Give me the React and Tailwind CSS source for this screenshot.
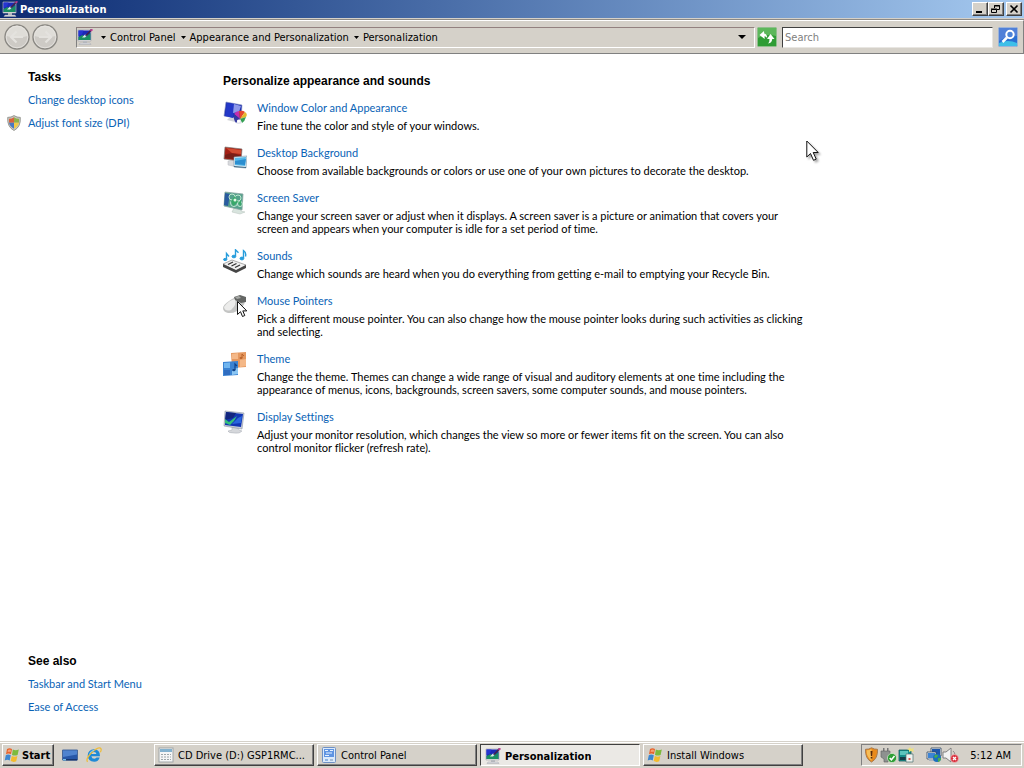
import { useState } from 'react'

const TASK_LINKS = [
  { label: 'Change desktop icons' },
  { label: 'Adjust font size (DPI)', shield: true },
]

const SEE_ALSO = ['Taskbar and Start Menu', 'Ease of Access']

const SETTINGS = [
  {
    title: 'Window Color and Appearance',
    text: 'Fine tune the color and style of your windows.',
    icon: WindowColorIcon,
  },
  {
    title: 'Desktop Background',
    text: 'Choose from available backgrounds or colors or use one of your own pictures to decorate the desktop.',
    icon: BackgroundIcon,
  },
  {
    title: 'Screen Saver',
    text: 'Change your screen saver or adjust when it displays. A screen saver is a picture or animation that covers your screen and appears when your computer is idle for a set period of time.',
    icon: ScreenSaverIcon,
  },
  {
    title: 'Sounds',
    text: 'Change which sounds are heard when you do everything from getting e-mail to emptying your Recycle Bin.',
    icon: SoundsIcon,
  },
  {
    title: 'Mouse Pointers',
    text: 'Pick a different mouse pointer. You can also change how the mouse pointer looks during such activities as clicking and selecting.',
    icon: MouseIcon,
  },
  {
    title: 'Theme',
    text: 'Change the theme. Themes can change a wide range of visual and auditory elements at one time including the appearance of menus, icons, backgrounds, screen savers, some computer sounds, and mouse pointers.',
    icon: ThemeIcon,
  },
  {
    title: 'Display Settings',
    text: 'Adjust your monitor resolution, which changes the view so more or fewer items fit on the screen. You can also control monitor flicker (refresh rate).',
    icon: DisplayIcon,
  },
]

const WINDOWS = [
  { label: 'CD Drive (D:) GSP1RMC...', icon: DriveIcon },
  { label: 'Control Panel', icon: PanelIcon },
  { label: 'Personalization', icon: PersonalizeIcon },
  { label: 'Install Windows', icon: FlagIcon },
]

const RAISED =
  'border border-t-white border-l-white border-r-[#404040] border-b-[#404040] shadow-[inset_-1px_-1px_0_#808080]'

/* ---------- icons ---------- */

function PersonalizeIcon({ className = 'size-4' }) {
  return (
    <svg viewBox="0 0 16 16" className={className} aria-hidden="true">
      <path d="M1 1h13v11H1z" fill="#e8e8ea" stroke="#a9abb0" strokeWidth=".7" />
      <path d="M1.500 1.500h12v9.500h-12z" fill="#1c28b8" />
      <path d="M1.500 8l4-2 3 2 5-4v7h-12z" fill="#1a8f62" />
      <path d="M1.500 1.500h5l-1.500 4-3.500 1.500z" fill="#2636d0" />
      <path d="M5 8.500l3-3 2 1-2 2z" fill="#d8f0e4" />
      <path d="M8 6.500L14 0l1.500 1L9.500 7z" fill="#43264a" />
      <path d="M13 1l2-1 1 1-2 1.500z" fill="#c93a96" />
      <path d="M6 12h4v2H6z" fill="#b9bcc1" />
      <path d="M3 14h10l1 1.500H2z" fill="#dcdee2" stroke="#a4a7ad" strokeWidth=".5" />
    </svg>
  )
}

function FlagIcon({ className = 'size-4' }) {
  return (
    <svg viewBox="0 0 16 16" className={className} aria-hidden="true">
      <path d="M3 2q2.500-1.500 5 0L7 7.300Q4.500 6 2 7.200z" fill="#e8642c" />
      <path d="M8.800 2.500q2.500 1.500 6 .1L13.600 8q-3 1.200-5.600-.1z" fill="#7dba3c" />
      <path d="M1.800 8.200q2.500-1.200 5 .1L5.700 13.500q-2.200-1.400-5-.1z" fill="#3d87d0" />
      <path d="M7.800 8.900q2.600 1.400 5.600.2L12.200 14.300q-2.800 1.300-5.500-.2z" fill="#f3bb2d" />
      <path d="M4 3q1.500-.8 3 0l-.4 2q-1.600-.6-3 0z" fill="#f6a277" />
    </svg>
  )
}

function DriveIcon({ className = 'size-4' }) {
  return (
    <svg viewBox="0 0 16 16" className={className} aria-hidden="true">
      <rect x="1" y="1" width="14" height="14" fill="#f5f6f6" stroke="#a0a6a8" />
      <rect x="2" y="2" width="12" height="3" fill="#83b2cf" />
      <path d="M3 7h2v1H3zm3 0h2v1H6zm3 0h2v1H9zm3 0h1v1h-1zM3 9.500h2v1H3zm3 0h2v1H6zm3 0h2v1H9zm3 0h1v1h-1zM3 12h2v1H3zm3 0h2v1H6zm3 0h2v1H9zm3 0h1v1h-1z" fill="#9da6a9" />
    </svg>
  )
}

function PanelIcon({ className = 'size-4' }) {
  return (
    <svg viewBox="0 0 16 16" className={className} aria-hidden="true">
      <rect x="1.500" y=".5" width="13" height="15" rx="1" fill="#dceafa" stroke="#6f91c4" />
      <rect x="3" y="2" width="10" height="8" fill="#5f94e2" />
      <path d="M4 3.500h3M9 3.500h3M5 6h6M4 8.500h4" stroke="#e8f2ff" />
      <path d="M4 12h3v2H4z" fill="#8fb4e4" />
      <path d="M9 12h3v2H9z" fill="#a8bdd6" />
    </svg>
  )
}

function DesktopIcon() {
  return (
    <svg viewBox="0 0 16 16" className="size-4" aria-hidden="true">
      <path d="M.5 3h15v10H.5z" fill="#2757a8" stroke="#48689a" />
      <path d="M1 3.500h14v4L1 10z" fill="#4f83cf" />
      <path d="M1 12h14v1.500H1z" fill="#17356f" />
      <path d="M1 12h3v1.500H1z" fill="#79c1e8" />
    </svg>
  )
}

function BrowserIcon() {
  return (
    <svg viewBox="0 0 16 16" className="size-4" aria-hidden="true">
      <path d="M14 9.200H5.400q.4 2.500 3 2.500 1.500 0 2.200-1.100h3.100Q12.500 14.800 8.200 14.800 1.800 14.500 1.700 8.600 2.100 2.500 8 2.300q6.200.4 6 6.900z" fill="#1f8ad6" />
      <path d="M5.400 7.100h5Q10.200 5 8 5q-2.300 0-2.600 2.100z" fill="#d5d2cb" />
      <path d="M1.500 14.800Q-.5 12 5 6.200q7-6.300 9.500-5 1.400 1-.1 4" fill="none" stroke="#eebc39" strokeWidth="1.300" />
      <path d="M3.500 6.500Q5 3.700 8 3.300" fill="none" stroke="#8ccff5" />
    </svg>
  )
}

function ShieldIcon() {
  return (
    <svg viewBox="0 0 16 16" className="size-4" aria-hidden="true">
      <path d="M8 .6q3 2 6.300 1.800Q15 12 8 15.500 1 12 1.700 2.400 5 2.600 8 .6z" fill="#c9cac6" stroke="#85877f" strokeWidth=".8" />
      <path d="M8 2.300v5.500H3V3.800q3 0 5-1.500z" fill="#d8643d" />
      <path d="M8 2.300q2 1.500 5 1.500v4H8z" fill="#8fb04a" />
      <path d="M3 7.800h5v5.900Q3.600 11.300 3 7.800z" fill="#4a78c2" />
      <path d="M13 7.800H8v5.900q4.400-2.400 5-5.900z" fill="#f2ca48" />
    </svg>
  )
}

function WindowColorIcon() {
  return (
    <svg viewBox="0 0 24 24" className="size-6" aria-hidden="true">
      <path d="M6 17l8-1 2 4-4 1-8-2z" fill="#d3d5da" />
      <path d="M3 1l16 3-1 14L1 15z" fill="#1c2fae" stroke="#8792c3" strokeWidth=".6" />
      <path d="M4 2l8 1-2 14-8-2z" fill="#2338c8" />
      <path d="M11 3l7 2-2 6-6 1z" fill="#8d98ea" />
      <path d="M17 18l-6-5q2-3 5-3z" fill="#c12fb0" />
      <path d="M17 18l-1-8q4-1 6 1z" fill="#e6472c" />
      <path d="M17 18l5-7q3 2 1 5z" fill="#e5b82d" />
      <path d="M17 18l6-2q-1 4-4 6z" fill="#34a053" />
      <path d="M17 18l2 4q-4 2-6 0z" fill="#e4e5ec" />
      <path d="M17 18l-4 4q-3-4-2-9z" fill="#3338a0" />
      <circle cx="15.500" cy="20" r="1.600" fill="#fff" />
    </svg>
  )
}

function BackgroundIcon() {
  return (
    <svg viewBox="0 0 24 24" className="size-6" aria-hidden="true">
      <path d="M5 15l5-1 1 3 3 4-9-2z" fill="#d7d9dc" stroke="#b9bbc0" strokeWidth=".5" />
      <path d="M2 1l17 2-1 12L1 13z" fill="#a42015" stroke="#807b79" strokeWidth=".7" />
      <path d="M3 2l15 2v4L9 7z" fill="#d04a30" />
      <path d="M2 9q7-4 16 1v4L2 12z" fill="#771e17" />
      <path d="M11 11l13-1-1 12-12-1z" fill="#daecf5" stroke="#7a96a7" strokeWidth=".6" />
      <path d="M12 12l11-1-1 9-10-1z" fill="#55b9ea" />
      <path d="M12 15l11-2-1 6-10-1z" fill="#2b8ed0" />
      <path d="M11 20l12 1v1l-12-1z" fill="#426b86" />
    </svg>
  )
}

function ScreenSaverIcon() {
  return (
    <svg viewBox="0 0 24 24" className="size-6" aria-hidden="true">
      <path d="M11 17h6l1 3 4 1-5 2-8-2z" fill="#d8e4de" stroke="#b4c1bb" strokeWidth=".5" />
      <path d="M2 1l18 2-1 16L1 15z" fill="#55a18c" stroke="#8ba5a2" strokeWidth=".8" />
      <path d="M2 2l5 1-2 12-4-1z" fill="#2a5b9f" />
      <g fill="none" stroke="#bfe8ce" strokeWidth="1">
        <circle cx="9" cy="6" r="3" />
        <circle cx="15" cy="7" r="3" />
        <circle cx="11" cy="12" r="3.500" />
        <circle cx="17" cy="13" r="2.500" />
      </g>
      <path d="M8 10l4-5 3 6-5 4zm7 2l3-3v6z" fill="#39a969" />
      <circle cx="12" cy="9" r="1.500" fill="#e6f7ea" />
    </svg>
  )
}

function SoundsIcon() {
  return (
    <svg viewBox="0 0 24 24" className="size-6" aria-hidden="true">
      <path d="M0 15l9-4 14 5-10 6z" fill="#f0f0f0" stroke="#777" strokeWidth=".6" />
      <path d="M0 15l13 6 10-5v3l-10 5L0 18z" fill="#454545" />
      <path d="M5 15.500l5-2.500M8.500 17l5-2.500M12 18.500l5-2.500" stroke="#333" strokeWidth="1.300" />
      <g fill="#279ddc" stroke="#279ddc">
        <path d="M3.500 10V4.500l2.500 3M12.500 7V.8l3 3M20.500 9V1.500q3 2 2 6" fill="none" strokeWidth="1.400" />
        <ellipse cx="2.200" cy="10.500" rx="1.700" ry="1.100" />
        <ellipse cx="10.900" cy="7.500" rx="1.900" ry="1.300" />
        <ellipse cx="18.900" cy="9.500" rx="1.900" ry="1.400" />
      </g>
    </svg>
  )
}

function MouseIcon() {
  return (
    <svg viewBox="0 0 24 24" className="size-6" aria-hidden="true">
      <path d="M0 14q0-3 6-7 8-6 13-3 5 3 1 8-7 8-15 7-5-1-5-5z" fill="#c4c5c4" />
      <path d="M1 13Q6 6 12 5q2 6-4 11-6 2-7-3z" fill="#ececeb" />
      <path d="M11 3l6-2 6 2v5l-5 1-6-3z" fill="#646664" />
      <path d="M12 3l4-1 2 2-4 1z" fill="#a6a8a5" />
      <path d="M14.500 7.500v13l3-2.800 2 4.800 2.300-1-2-4.600h4z" fill="#fff" stroke="#111" strokeWidth="1" />
    </svg>
  )
}

function ThemeIcon() {
  return (
    <svg viewBox="0 0 24 24" className="size-6" aria-hidden="true">
      <path d="M8 1l15-1v15l-14 1z" fill="#e5985f" />
      <path d="M9 2l6-1v6H9zM17 8l6-1v7l-6 1z" fill="#f4b888" />
      <path d="M19 6V2l2 2" fill="none" stroke="#b8622b" />
      <ellipse cx="18" cy="6" rx="1.500" ry="1" fill="#b8622b" />
      <path d="M0 10l15-1v14l-15 1z" fill="#3a82d2" />
      <path d="M1 11l6-.5V16H1z" fill="#70b5ef" />
      <path d="M1 18h6v5H1z" fill="#2f6cc0" />
      <path d="M9 17l6-1v6l-6 1z" fill="#8bc6f3" />
      <path d="M12 18v-6l2 2" fill="none" stroke="#10448d" strokeWidth="1.200" />
      <ellipse cx="10.800" cy="18" rx="1.700" ry="1.200" fill="#10448d" />
    </svg>
  )
}

function DisplayIcon() {
  return (
    <svg viewBox="0 0 24 24" className="size-6" aria-hidden="true">
      <path d="M9 17l6 1 1 2 3 1q-2 3-8 2-6 0-6-2l4-1z" fill="#d5d7db" stroke="#a9adb4" strokeWidth=".5" />
      <path d="M2 1l19 2-2 16L1 16z" fill="#c7cdd6" stroke="#8d96a6" strokeWidth=".6" />
      <path d="M3 2l17 2-2 13-16-2z" fill="#1236b4" />
      <path d="M3 2l10 1-3 5-8 2z" fill="#11257e" />
      <path d="M2 9l4 3 8-6-3 5-4 4-5-2z" fill="#35c07c" />
      <path d="M9 14l6-6 4-2-1 7z" fill="#2a66de" />
    </svg>
  )
}

function RefreshIcon() {
  return (
    <svg viewBox="0 0 20 20" className="size-5" aria-hidden="true">
      <rect x=".5" y=".5" width="19" height="19" rx="1" fill="#2f9c35" stroke="#8fbf8c" />
      <path d="M1 1h18v8q-9-3-18 2z" fill="#5cb75b" />
      <path d="M2.500 8L7 4l.2 2.500q3 .5 3 4.500-1-1.700-2.700-1.700L7.700 12z" fill="#fff" />
      <path d="M13.500 7l4 5h-2.300q-.2 4-4.200 4.500 1.700-1.700 1.500-4.500H10z" fill="#fff" />
    </svg>
  )
}

function SearchIcon() {
  return (
    <svg viewBox="0 0 20 20" className="size-5" aria-hidden="true">
      <rect x=".5" y=".5" width="19" height="19" rx="1" fill="#2a6fd2" stroke="#9db4d8" />
      <path d="M1 1h18v8Q8 9 1 14z" fill="#5080d8" />
      <path d="M1 16q9-4 18 0v3H1z" fill="#3fbfe8" />
      <circle cx="12" cy="7.500" r="3.700" fill="#4c83d8" stroke="#fff" strokeWidth="2" />
      <path d="M9 10.500L4.500 15" stroke="#fff" strokeWidth="2.500" />
    </svg>
  )
}

function NavCircle({ flip }) {
  return (
    <svg viewBox="0 0 26 26" className={flip ? 'size-[26px] -scale-x-100' : 'size-[26px]'} aria-hidden="true">
      <circle cx="13" cy="13" r="12" fill="#cdcac5" stroke="#8a8883" strokeWidth="1.400" />
      <path d="M2.500 12a10.500 10.500 0 0121 0q-10 3-21 0z" fill="#dfddd8" />
      <circle cx="13" cy="13" r="10.800" fill="none" stroke="#e8e6e2" strokeWidth=".8" />
      <path d="M12.500 7.500L7 13l5.500 5.500M7.500 13H19" fill="none" stroke="#e4e2de" strokeWidth="2.200" />
    </svg>
  )
}

function Caret() {
  return (
    <svg viewBox="0 0 5 3" className="h-[3px] w-[5px] shrink-0" aria-hidden="true">
      <path d="M0 0h5L2.500 3z" fill="#000" />
    </svg>
  )
}

function AlertShieldIcon() {
  return (
    <svg viewBox="0 0 16 16" className="size-4" aria-hidden="true">
      <path d="M7.500.8q3 1.700 6 1.500.6 9-6 12.700Q1 11.500 1.500 2.300 5 2.500 7.500.8z" fill="#e98a1b" stroke="#a87a4c" />
      <path d="M7.500 2q-2 1.300-5 1.300 0 7 5 10.200z" fill="#f7bd57" />
      <path d="M6.500 4h2l-.4 5H6.900zM6.700 10h1.600v1.600H6.700z" fill="#5a2c0b" />
    </svg>
  )
}

function DeviceIcon() {
  return (
    <svg viewBox="0 0 18 16" className="h-4 w-[18px]" aria-hidden="true">
      <path d="M3 1h1.500v3H3zM7 1h1.500v3H7z" fill="#777" />
      <path d="M1 4h9v6l-2 2v3H4v-3l-3-2z" fill="#8e918f" stroke="#5e605f" strokeWidth=".6" />
      <circle cx="12" cy="11" r="4.600" fill="#2f9e35" stroke="#d7ead3" strokeWidth=".7" />
      <path d="M9.700 11l1.700 1.800L14.500 9" fill="none" stroke="#fff" strokeWidth="1.500" />
    </svg>
  )
}

function ServerIcon() {
  return (
    <svg viewBox="0 0 16 16" className="size-4" aria-hidden="true">
      <path d="M1 3h12v11H1z" fill="#168f8c" stroke="#145c5c" strokeWidth=".8" />
      <path d="M2 4h8v4H2z" fill="#5bc5bd" />
      <path d="M2 10h6v3H2z" fill="#153d48" />
      <path d="M8 7h7v8H8z" fill="#eef2ee" stroke="#4c7070" strokeWidth=".7" />
      <path d="M10.500 11h2v2h-2z" fill="#d6544f" />
      <path d="M12 0l1 2 3-1-1 2 1 2-3-1-2 1V3L9 2l2-.500z" fill="#efe27b" />
    </svg>
  )
}

function NetworkIcon() {
  return (
    <svg viewBox="0 0 16 16" className="size-4" aria-hidden="true">
      <path d="M5 1h10v8H5z" fill="#e7edf4" stroke="#34465e" strokeWidth=".8" />
      <path d="M6 2h8v6H6z" fill="#1d57ad" />
      <path d="M1 5h9v7H1z" fill="#edf2f7" stroke="#34465e" strokeWidth=".8" />
      <path d="M2 6h7v5H2z" fill="#3d84d4" />
      <path d="M3 12h5v2H3z" fill="#adb5be" />
      <circle cx="11" cy="11" r="4" fill="#1a70bd" />
      <path d="M9 8q3-1 3 1l-2 2-2-1zm3 3h3q0 3-3 4z" fill="#45ae4d" />
    </svg>
  )
}

function MutedIcon() {
  return (
    <svg viewBox="0 0 18 16" className="h-4 w-[18px]" aria-hidden="true">
      <path d="M1 5h3l5-4v14l-5-4H1z" fill="#f3f3f2" stroke="#777" strokeWidth=".9" />
      <path d="M11 4q2 1.500 2 4" fill="none" stroke="#888" />
      <circle cx="12.500" cy="11.500" r="4" fill="#d9303d" stroke="#f2cccf" strokeWidth=".6" />
      <path d="M11 10l3 3m0-3l-3 3" stroke="#fff" strokeWidth="1.300" />
    </svg>
  )
}

/* ---------- window chrome ---------- */

function CaptionButton({ label, children }) {
  return (
    <button type="button" aria-label={label} className={`flex h-[14px] w-4 items-center justify-center bg-[#d5d1c9] ${RAISED}`}>
      <svg viewBox="0 0 12 10" className="h-[10px] w-3" fill="none" stroke="#000" aria-hidden="true">
        {children}
      </svg>
    </button>
  )
}

function TitleBar() {
  return (
    <header className="flex h-[18px] items-center justify-between bg-linear-to-r from-[#0c2a72] to-[#a6caf0] px-0.5">
      <div className="flex items-center gap-0.5">
        <PersonalizeIcon className="size-4" />
        <h1 className="font-['DejaVu_Sans_Condensed','DejaVu_Sans',sans-serif] text-[11px] font-bold text-white">Personalization</h1>
      </div>
      <div className="flex">
        <CaptionButton label="Minimize">
          <path d="M2 8h6" strokeWidth="2" />
        </CaptionButton>
        <CaptionButton label="Restore">
          <path d="M4.500 4V1.500h5v4H7M4 2h6M1.500 5.500h5v3h-5zM1 5h6" />
        </CaptionButton>
        <span className="w-0.5" />
        <CaptionButton label="Close">
          <path d="M2.500 1.500l7 7m0-7l-7 7" strokeWidth="1.600" />
        </CaptionButton>
      </div>
    </header>
  )
}

function AddressBar() {
  const crumbs = ['Control Panel', 'Appearance and Personalization', 'Personalization']
  return (
    <div className="flex h-[34px] items-center border-t border-r border-b border-t-white border-r-[#808080] border-b-[#808080] bg-[#d5d1c9] pr-[5px] pl-1 shadow-[0_-1px_0_#8d8a85]">
      <div className="flex gap-0.5">
        <button type="button" aria-label="Back"><NavCircle /></button>
        <button type="button" aria-label="Forward"><NavCircle flip /></button>
      </div>
      <nav aria-label="Address" className="ml-[18px] flex h-[21px] min-w-0 flex-1 items-center border border-t-[#93817f] border-r-white border-b-white border-l-[#808080] font-['DejaVu_Sans_Condensed','DejaVu_Sans',sans-serif]">
        <PersonalizeIcon className="size-4 shrink-0" />
        <ol className="ml-2 flex items-center gap-[5px]">
          {crumbs.map((c) => (
            <li key={c} className="flex items-center gap-1">
              <Caret />
              <a href="#" className="whitespace-nowrap">{c}</a>
            </li>
          ))}
        </ol>
        <button type="button" aria-label="Previous locations" className="ml-auto px-2">
          <svg viewBox="0 0 8 4" className="h-1 w-2" aria-hidden="true"><path d="M0 0h8L4 4z" /></svg>
        </button>
      </nav>
      <button type="button" aria-label="Refresh" className="mr-[5px] ml-0.5"><RefreshIcon /></button>
      <input
        type="search"
        aria-label="Search"
        placeholder="Search"
        className="h-[21px] w-[211px] border border-t-[#404040] border-r-[#e8e6e2] border-b-[#e8e6e2] border-l-[#404040] bg-white px-0.5 font-['DejaVu_Sans_Condensed','DejaVu_Sans',sans-serif] text-[11px] outline-none placeholder:text-[#808080]"
      />
      <button type="button" aria-label="Go" className="ml-[5px]"><SearchIcon /></button>
    </div>
  )
}

function Sidebar() {
  return (
    <aside className="flex w-[223px] shrink-0 flex-col pt-3 pb-[23px]">
      <h2 className="pl-7 font-['Liberation_Sans',Arial,sans-serif] text-xs leading-[22px] font-bold">Tasks</h2>
      <ul>
        {TASK_LINKS.map((task) => (
          <li key={task.label} className="flex h-[23px] items-center pl-1.5">
            <span className="w-[22px]">{task.shield && <ShieldIcon />}</span>
            <a href="#" className="text-[#0a63b6] hover:underline">{task.label}</a>
          </li>
        ))}
      </ul>
      <h2 className="mt-auto pl-7 font-['Liberation_Sans',Arial,sans-serif] text-xs leading-[22px] font-bold">See also</h2>
      <ul className="pl-7">
        {SEE_ALSO.map((label) => (
          <li key={label} className="leading-[23px]">
            <a href="#" className="text-[#0a63b6] hover:underline">{label}</a>
          </li>
        ))}
      </ul>
    </aside>
  )
}

function Taskbar() {
  const [active, setActive] = useState('Personalization')
  return (
    <footer className="flex h-[27px] items-center border-t border-[#d5d1c9] bg-[#d5d1c9] px-0.5 font-['DejaVu_Sans_Condensed','DejaVu_Sans',sans-serif] shadow-[inset_0_1px_0_#fff]">
      <button type="button" className={`flex h-[22px] w-[52px] items-center gap-0.5 pl-px font-bold ${RAISED}`}>
        <FlagIcon className="size-4 shrink-0" />
        Start
      </button>
      <div className="ml-2 flex gap-2">
        <button type="button" aria-label="Show desktop"><DesktopIcon /></button>
        <button type="button" aria-label="Internet browser"><BrowserIcon /></button>
      </div>
      <div className="ml-[52px] flex min-w-0 flex-1 gap-[3px]">
        {WINDOWS.map(({ label, icon: Icon }) => (
          <button
            key={label}
            type="button"
            aria-pressed={active === label}
            onClick={() => setActive(label)}
            className={
              active === label
                ? 'flex h-[22px] w-40 items-center gap-1 border border-t-[#404040] border-r-white border-b-white border-l-[#404040] bg-[#ebe9e5] pt-0.5 pl-1 font-bold'
                : `flex h-[22px] w-40 items-center gap-1 pl-[3px] ${RAISED}`
            }
          >
            <Icon className="size-4 shrink-0" />
            <span className="truncate">{label}</span>
          </button>
        ))}
      </div>
      <div className="flex h-[22px] items-center border border-t-[#808080] border-r-white border-b-white border-l-[#808080] pr-2.5 pl-0.5">
        <AlertShieldIcon />
        <DeviceIcon />
        <ServerIcon />
        <span className="w-3" />
        <NetworkIcon />
        <MutedIcon />
        <time className="ml-2.5">5:12 AM</time>
      </div>
    </footer>
  )
}

export default function App() {
  return (
    <div className="flex min-h-screen flex-col bg-white font-[Lato,Arial,sans-serif] text-[11px] leading-[13px] text-black [font-variant-ligatures:none]">
      <TitleBar />
      <div className="h-[2px] bg-[#d5d1c9]" />
      <AddressBar />
      <div className="flex flex-1">
        <Sidebar />
        <main className="min-w-0 flex-1 pt-[18px]">
          <h2 className="font-['Liberation_Sans',Arial,sans-serif] text-xs leading-[18px] font-bold">Personalize appearance and sounds</h2>
          <ul className="mt-[9px] flex flex-col gap-3">
            {SETTINGS.map(({ title, text, icon: Icon }) => (
              <li key={title} className="flex gap-2.5">
                <div className="pt-0.5"><Icon /></div>
                <div className="max-w-[550px] flex-1">
                  <h3 className="mb-0.5 leading-[18px]">
                    <a href="#" className="text-[#0a63b6] hover:underline">{title}</a>
                  </h3>
                  <p>{text}</p>
                </div>
              </li>
            ))}
          </ul>
        </main>
      </div>
      <Taskbar />
      {/* mouse cursor */}
      <svg viewBox="0 0 14 22" className="pointer-events-none absolute top-[140px] left-[806px] h-[22px] w-3.5 drop-shadow-[2px_2px_1px_rgba(0,0,0,0.35)]" aria-hidden="true">
        <path d="M.8 1v16l3.700-3.500 3 6.800 2.700-1.200-3-6.600h5z" fill="#fff" stroke="#111" />
      </svg>
    </div>
  )
}
